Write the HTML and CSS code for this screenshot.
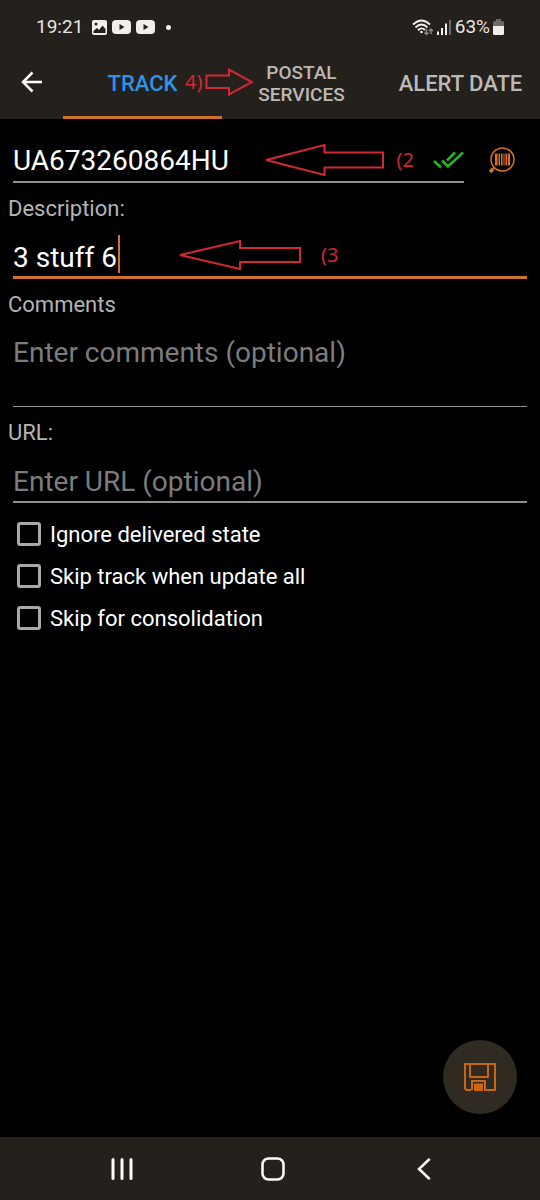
FILE: index.html
```html
<!DOCTYPE html>
<html lang="en">
<head>
  <meta charset="UTF-8">
  <meta name="viewport" content="width=device-width, initial-scale=1.0">
  <title>Edit track</title>
  <link rel="stylesheet" href="styles.css">
</head>
<body>
  <div class="app">
    <header class="header">
      <div class="status-bar">
        <div class="status-left">
          <span class="time">19:21</span>
          <svg width="15" height="15" viewBox="0 0 15 15">
            <rect width="15" height="15" rx="2" fill="#f1efec"/>
            <circle cx="4" cy="4" r="1.500" fill="#24201c"/>
            <path d="M1.500 13V11L5 8l2 2 3.500-4.500 3 3.500V13z" fill="#24201c"/>
          </svg>
          <svg width="19" height="14" viewBox="0 0 19 14">
            <rect width="19" height="14" rx="4" fill="#f1efec"/>
            <path d="M7.500 4v6l5-3z" fill="#24201c"/>
          </svg>
          <svg width="19" height="14" viewBox="0 0 19 14">
            <rect width="19" height="14" rx="4" fill="#f1efec"/>
            <path d="M7.500 4v6l5-3z" fill="#24201c"/>
          </svg>
          <span class="dot"></span>
        </div>
        <div class="status-right">
          <svg width="22" height="17" viewBox="0 0 22 17" fill="none" stroke="#f1efec" stroke-width="1.800">
            <path d="M1 5.500Q9.500-2.500 18 5.500M3.500 8.500Q9.500 2.500 15.500 8.500M6 11.300Q9.500 7.500 13 11"/>
            <circle cx="9.500" cy="13" r="1.300" fill="#f1efec" stroke="none"/>
            <path d="M14.500 10v5.500M12.500 13.500l2 2 2-2M19 15v-5M17 12l2-2 2 2" stroke="#8b8884" stroke-width="1.500"/>
          </svg>
          <svg width="15" height="16" viewBox="0 0 15 16">
            <path d="M0 12.500h2V16H0zM4 9h2v7H4zM8 4.500h2V16H8z" fill="#f1efec"/>
            <path d="M12 1h2v15h-2z" fill="#6c6966"/>
          </svg>
          <span class="battery-text">63%</span>
          <svg width="11" height="16" viewBox="0 0 11 16">
            <path d="M3 0h5v2h1.500Q11 2 11 3.500V8H0V3.500Q0 2 1.500 2H3z" fill="#6c6966"/>
            <path d="M0 7h11v7.500Q11 16 9.500 16h-8Q0 16 0 14.500z" fill="#f1efec"/>
          </svg>
        </div>
      </div>
      <nav class="tab-bar">
        <button class="back-btn" type="button" aria-label="Back">
          <svg width="22" height="22" viewBox="0 0 22 22" fill="none" stroke="#fff" stroke-width="2.500">
            <path d="M21 11H2M11.500 1.500L2 11l9.500 9.500"/>
          </svg>
        </button>
        <div class="tabs">
          <button class="tab active" type="button">TRACK
            <span class="note note-tab">4)
              <svg width="49" height="28" viewBox="0 0 49 28">
                <path d="M1.500 7.500H24V1.500L47 14 24 26.500V20H1.500z"/>
              </svg>
            </span>
          </button>
          <button class="tab tab-small" type="button">POSTAL SERVICES</button>
          <button class="tab" type="button">ALERT DATE</button>
        </div>
      </nav>
    </header>

    <form class="track-form">
      <div class="number-row">
        <div class="number-field">
          <input class="text-input" type="text" value="UA673260864HU" aria-label="Track number">
          <button class="icon-btn" type="button" aria-label="Check number">
            <svg width="31" height="18" viewBox="0 0 31 18" fill="none" stroke="#22b922" stroke-width="2.500">
              <path d="M1 10l7 6.500M9 9.500l6 6L30 1.500M14 9.500L22 1.500"/>
            </svg>
          </button>
          <span class="note note-number">
            <svg width="121" height="34" viewBox="0 0 121 34">
              <path d="M2 17L60.500 2v7.500H119v15H60.500V32z"/>
            </svg>
            (2
          </span>
        </div>
        <button class="icon-btn scan-btn" type="button" aria-label="Scan barcode">
          <svg width="27" height="27" viewBox="0 0 27 27">
            <circle cx="14.500" cy="12.500" r="11.500" fill="none" stroke="#d87328" stroke-width="1.500"/>
            <path d="M7 6.500h2.500v12H7zM10.500 6.500H12v12h-1.500zM13 6.500h1.500v12H13zM15.500 6.500h1v12h-1zM17.500 6.500h1.500v12h-1.500zM19.800 6.500h2.200v12h-2.200z" fill="#d87328"/>
            <path d="M6.500 20.500L5 22" stroke="#d87328" stroke-width="2"/>
            <path d="M5 22L2 25" stroke="#d87328" stroke-width="3.500"/>
          </svg>
        </button>
      </div>

      <label class="field-label" for="description">Description:</label>
      <div class="field">
        <input class="text-input line focused" id="description" type="text" value="3 stuff 6">
        <span class="caret"></span>
        <span class="note note-description">
          <svg width="124" height="32" viewBox="0 0 124 32">
            <path d="M2 16L62 2v7h60v14H62v7z"/>
          </svg>
          (3
        </span>
      </div>

      <label class="field-label" for="comments">Comments</label>
      <div class="field">
        <textarea class="text-input line" id="comments" rows="2" placeholder="Enter comments (optional)"></textarea>
      </div>

      <label class="field-label" for="url">URL:</label>
      <div class="field">
        <input class="text-input line" id="url" type="text" placeholder="Enter URL (optional)">
      </div>

      <div class="options">
        <label class="option"><input type="checkbox">Ignore delivered state</label>
        <label class="option"><input type="checkbox">Skip track when update all</label>
        <label class="option"><input type="checkbox">Skip for consolidation</label>
      </div>
    </form>

    <div class="actions">
      <button class="save-btn" type="button" aria-label="Save">
        <svg width="32" height="28" viewBox="0 0 32 28" fill="none" stroke="#c9660f" stroke-width="2" stroke-linejoin="round">
          <path d="M7 27H2.500L1 25.500V1h30v26H21V18H8v9"/>
          <path d="M6 1v13h18V1"/>
          <path d="M10 20.500h9V28h-9z" fill="#c9660f" stroke="none"/>
        </svg>
      </button>
    </div>

    <footer class="nav-bar">
      <button class="nav-btn" type="button" aria-label="Recent apps">
        <svg width="22" height="22" viewBox="0 0 22 22" stroke="#fff" stroke-width="3" stroke-linecap="round">
          <path d="M2 1.500v19M11 1.500v19M20 1.500v19"/>
        </svg>
      </button>
      <button class="nav-btn" type="button" aria-label="Home">
        <svg width="24" height="24" viewBox="0 0 24 24" fill="none" stroke="#fff" stroke-width="2.500">
          <rect x="1.500" y="1.500" width="21" height="21" rx="6"/>
        </svg>
      </button>
      <button class="nav-btn" type="button" aria-label="Back">
        <svg width="14" height="22" viewBox="0 0 14 22" fill="none" stroke="#fff" stroke-width="2.500" stroke-linecap="round">
          <path d="M12 1.500L2 11l10 9.500"/>
        </svg>
      </button>
    </footer>
  </div>
</body>
</html>
```

FILE: styles.css
```css
* {
  box-sizing: border-box;
}
body {
  margin: 0;
  background: #000;
  color: #fff;
  font-family: Roboto, sans-serif;
}
button {
  padding: 0;
  border: none;
  background: none;
  color: inherit;
  font-family: inherit;
  cursor: pointer;
}
svg {
  display: block;
  flex: none;
}
.app {
  display: flex;
  flex-direction: column;
  min-height: 100vh;
}

/* Header */
.header {
  background: #24201c;
}
.status-bar {
  display: flex;
  justify-content: space-between;
  padding: 15px 36px 9px;
  font-size: 19px;
  line-height: 24px;
  color: #e8e5e2;
}
.status-left, .status-right {
  display: flex;
  align-items: center;
}
.status-left {
  gap: 5px;
}
.status-right {
  gap: 3px;
}
.time {
  margin-right: 4px;
}
.dot {
  width: 5px;
  height: 5px;
  margin-left: 6px;
  border-radius: 50%;
  background: #f1efec;
}
.tab-bar {
  display: flex;
  height: 71px;
}
.back-btn {
  display: flex;
  align-items: center;
  justify-content: center;
  width: 63px;
  padding-bottom: 3px;
}
.tabs {
  display: grid;
  grid-template-columns: repeat(3, minmax(0, 1fr));
  flex: 1;
}
.tab {
  position: relative;
  padding-top: 3px;
  border-bottom: 3px solid transparent;
  font-size: 22px;
  line-height: 22px;
  font-weight: 500;
  color: #bcb8b4;
}
.tab-small {
  padding-right: 32px;
  padding-left: 32px;
  font-size: 19px;
}
.active {
  border-color: #d0702a;
  color: #2d94e8;
}

/* Form */
.track-form {
  padding: 24px 0 0 8px;
}
.number-row {
  display: flex;
  padding-left: 5px;
}
.number-field {
  position: relative;
  display: flex;
  flex: 1;
  height: 40px;
  border-bottom: 2px solid #8f8f8f;
}
.icon-btn {
  display: flex;
  align-items: center;
  justify-content: center;
  height: 34px;
}
.scan-btn {
  width: 76px;
  padding-right: 2px;
}
.field {
  position: relative;
  padding: 0 13px 0 5px;
}
.field-label {
  display: block;
  margin: 13px 0 17px;
  font-size: 22px;
  line-height: 26px;
  color: #b4b4b4;
}
.text-input {
  display: block;
  flex: 1;
  width: 100%;
  min-width: 0;
  height: 36px;
  padding: 0;
  border: none;
  outline: none;
  background: none;
  color: #fff;
  font-family: inherit;
  font-size: 28px;
  line-height: 36px;
  resize: none;
}
.text-input::placeholder {
  color: #7c7c7c;
  opacity: 1;
}
.line {
  height: 40px;
  padding-bottom: 2px;
  border-bottom: 2px solid #8f8f8f;
}
textarea.line {
  height: 72px;
  border-bottom-width: 1px;
}
.focused {
  padding-bottom: 1px;
  border-bottom: 3px solid #d0702a;
  caret-color: transparent;
}
.caret {
  position: absolute;
  top: -4px;
  left: 110px;
  width: 2px;
  height: 38px;
  background: #d0702a;
}

.options {
  padding: 10px 9px;
}
.option {
  display: flex;
  align-items: center;
  gap: 9px;
  height: 42px;
  font-size: 22px;
}
.option input {
  appearance: none;
  width: 24px;
  height: 24px;
  margin: 0;
  border: 3px solid #a8a8a8;
  border-radius: 3px;
}
.option input:checked {
  background: #d0702a;
}

/* Red step notes */
.note {
  position: absolute;
  display: flex;
  align-items: center;
  font-family: "Noto Sans", sans-serif;
  font-size: 20px;
  line-height: 24px;
  font-weight: 400;
  color: #d22734;
  pointer-events: none;
}
.note svg {
  fill: none;
  stroke: #d22734;
  stroke-width: 2;
}
.note-tab {
  top: 20px;
  left: 122px;
  z-index: 1;
  gap: 3px;
}
.note-number {
  top: 0;
  right: 50px;
  gap: 12px;
}
.note-description {
  top: 0;
  left: 170px;
  gap: 19px;
}

/* Save button and system navigation */
.actions {
  display: flex;
  justify-content: flex-end;
  margin-top: auto;
  padding: 0 23px 23px;
}
.save-btn {
  display: flex;
  align-items: center;
  justify-content: center;
  width: 74px;
  height: 74px;
  border-radius: 50%;
  background: #2f2a22;
}
.nav-bar {
  display: flex;
  justify-content: center;
  height: 63px;
  padding: 0 41px 0 46px;
  background: #24201c;
}
.nav-btn {
  display: flex;
  flex: 1;
  align-items: center;
  justify-content: center;
}
```
